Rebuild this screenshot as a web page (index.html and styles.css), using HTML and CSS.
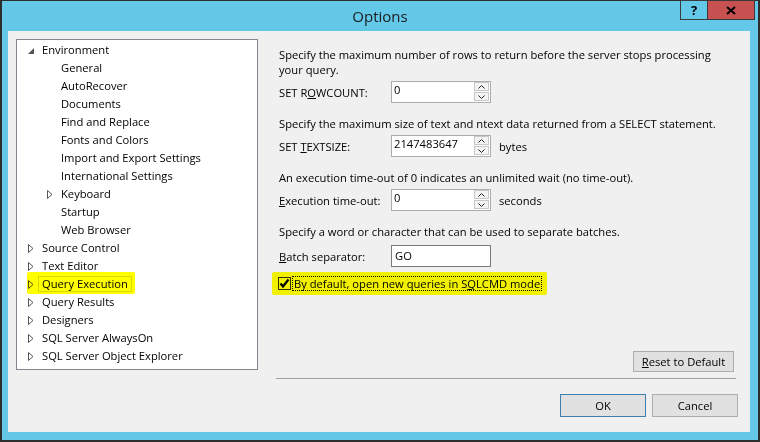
FILE: index.html
```html
<!DOCTYPE html>
<html lang="en">
<head>
  <meta charset="UTF-8" />
  <title>Options</title>
  <link rel="stylesheet" href="styles.css">
</head>
<body>
  <div class="window">
    <div class="titlebar">
      <span class="title">Options</span>
      <div class="caption">
        <span class="cap help">?</span>
        <span class="cap close">
          <svg width="10" height="9" viewBox="0 0 10 9"><path d="M1 1 L9 8 M9 1 L1 8" stroke="#000" stroke-width="2"/></svg>
        </span>
      </div>
    </div>

    <div class="client">
      <!-- left: category tree -->
      <ul class="tree">
        <li class="node open"><span class="exp"><svg width="6" height="6" viewBox="0 0 6 6"><path d="M6 0 L6 6 L0 6 Z" fill="#555"/></svg></span><span class="lbl">Environment</span></li>
        <li class="node child"><span class="exp"></span><span class="lbl">General</span></li>
        <li class="node child"><span class="exp"></span><span class="lbl">AutoRecover</span></li>
        <li class="node child"><span class="exp"></span><span class="lbl">Documents</span></li>
        <li class="node child"><span class="exp"></span><span class="lbl">Find and Replace</span></li>
        <li class="node child"><span class="exp"></span><span class="lbl">Fonts and Colors</span></li>
        <li class="node child"><span class="exp"></span><span class="lbl">Import and Export Settings</span></li>
        <li class="node child"><span class="exp"></span><span class="lbl">International Settings</span></li>
        <li class="node child"><span class="exp"><svg width="6" height="9" viewBox="0 0 6 9"><path d="M0.5 0.5 L5 4.5 L0.5 8.5 Z" fill="none" stroke="#555"/></svg></span><span class="lbl">Keyboard</span></li>
        <li class="node child"><span class="exp"></span><span class="lbl">Startup</span></li>
        <li class="node child"><span class="exp"></span><span class="lbl">Web Browser</span></li>
        <li class="node"><span class="exp"><svg width="6" height="9" viewBox="0 0 6 9"><path d="M0.5 0.5 L5 4.5 L0.5 8.5 Z" fill="none" stroke="#555"/></svg></span><span class="lbl">Source Control</span></li>
        <li class="node"><span class="exp"><svg width="6" height="9" viewBox="0 0 6 9"><path d="M0.5 0.5 L5 4.5 L0.5 8.5 Z" fill="none" stroke="#555"/></svg></span><span class="lbl">Text Editor</span></li>
        <li class="node"><span class="marked"><span class="exp"><svg width="6" height="9" viewBox="0 0 6 9"><path d="M0.5 0.5 L5 4.5 L0.5 8.5 Z" fill="none" stroke="#555"/></svg></span><span class="lbl selected">Query Execution</span></span></li>
        <li class="node"><span class="exp"><svg width="6" height="9" viewBox="0 0 6 9"><path d="M0.5 0.5 L5 4.5 L0.5 8.5 Z" fill="none" stroke="#555"/></svg></span><span class="lbl">Query Results</span></li>
        <li class="node"><span class="exp"><svg width="6" height="9" viewBox="0 0 6 9"><path d="M0.5 0.5 L5 4.5 L0.5 8.5 Z" fill="none" stroke="#555"/></svg></span><span class="lbl">Designers</span></li>
        <li class="node"><span class="exp"><svg width="6" height="9" viewBox="0 0 6 9"><path d="M0.5 0.5 L5 4.5 L0.5 8.5 Z" fill="none" stroke="#555"/></svg></span><span class="lbl">SQL Server AlwaysOn</span></li>
        <li class="node"><span class="exp"><svg width="6" height="9" viewBox="0 0 6 9"><path d="M0.5 0.5 L5 4.5 L0.5 8.5 Z" fill="none" stroke="#555"/></svg></span><span class="lbl">SQL Server Object Explorer</span></li>
      </ul>

      <!-- right: Query Execution page -->
      <div class="page">
        <div class="settings">
          <p class="hint">Specify the maximum number of rows to return before the server stops processing<br>your query.</p>
          <div class="field">
            <label>SET R<u>O</u>WCOUNT:</label>
            <div class="box spin">
              <span class="val">0</span>
              <div class="arrows">
                <span class="arr"><svg width="7" height="4" viewBox="0 0 7 4"><path d="M0.5 3.5 L3.5 0.5 L6.5 3.5" fill="none" stroke="#222"/></svg></span>
                <span class="arr"><svg width="7" height="4" viewBox="0 0 7 4"><path d="M0.5 0.5 L3.5 3.5 L6.5 0.5" fill="none" stroke="#222"/></svg></span>
              </div>
            </div>
          </div>

          <p class="hint">Specify the maximum size of text and ntext data returned from a SELECT statement.</p>
          <div class="field">
            <label>SET <u>T</u>EXTSIZE:</label>
            <div class="box spin">
              <span class="val">2147483647</span>
              <div class="arrows">
                <span class="arr"><svg width="7" height="4" viewBox="0 0 7 4"><path d="M0.5 3.5 L3.5 0.5 L6.5 3.5" fill="none" stroke="#222"/></svg></span>
                <span class="arr"><svg width="7" height="4" viewBox="0 0 7 4"><path d="M0.5 0.5 L3.5 3.5 L6.5 0.5" fill="none" stroke="#222"/></svg></span>
              </div>
            </div>
            <span class="unit">bytes</span>
          </div>

          <p class="hint">An execution time-out of 0 indicates an unlimited wait (no time-out).</p>
          <div class="field">
            <label><u>E</u>xecution time-out:</label>
            <div class="box spin">
              <span class="val">0</span>
              <div class="arrows">
                <span class="arr"><svg width="7" height="4" viewBox="0 0 7 4"><path d="M0.5 3.5 L3.5 0.5 L6.5 3.5" fill="none" stroke="#222"/></svg></span>
                <span class="arr"><svg width="7" height="4" viewBox="0 0 7 4"><path d="M0.5 0.5 L3.5 3.5 L6.5 0.5" fill="none" stroke="#222"/></svg></span>
              </div>
            </div>
            <span class="unit">seconds</span>
          </div>

          <p class="hint">Specify a word or character that can be used to separate batches.</p>
          <div class="field sep">
            <label><u>B</u>atch separator:</label>
            <div class="box text"><span class="val mid">GO</span></div>
          </div>

          <div class="check-row">
            <span class="marked wide">
              <span class="checkbox"><svg width="11" height="11" viewBox="0 0 11 11"><path d="M1.5 5.5 L4 8.5 L9.5 1.5" fill="none" stroke="#000" stroke-width="2.2"/></svg></span>
              <span class="focus">By default, open new queries in S<u>Q</u>LCMD mode</span>
            </span>
          </div>
        </div>

        <div class="reset-row"><button class="btn reset"><u>R</u>eset to Default</button></div>
        <div class="divider"></div>
        <div class="actions">
          <button class="btn default">OK</button>
          <button class="btn">Cancel</button>
        </div>
      </div>
    </div>
  </div>
</body>
</html>
```

FILE: styles.css
```css
body {
  margin: 0;
  font-family: "Open Sans", "Noto Sans", sans-serif;
  font-size: 11.2px;
  color: #000;
  background: #fff;
}
.window {
  width: 760px;
  height: 442px;
  box-sizing: border-box;
  background: #64c8e9;
  border: 2px solid #2d2d2d;
  border-top-width: 1px;
  display: flex;
  flex-direction: column;
}
.titlebar {
  position: relative;
  height: 30px;
  display: flex;
  justify-content: center;
  align-items: center;
}
.title {
  font-size: 15px;
  color: #1c1c1c;
  margin-top: -1px;
}
.caption {
  position: absolute;
  top: -1px;
  right: 3px;
  display: flex;
}
.cap {
  height: 20px;
  box-sizing: border-box;
  border: 1px solid #3a3a3a;
  display: flex;
  align-items: center;
  justify-content: center;
}
.help {
  width: 27px;
  font-weight: bold;
  font-size: 13px;
  border-right: none;
}
.close {
  width: 48px;
  background: #c75050;
}
.client {
  flex: 1;
  margin: 0 8px 8px 6px;
  background: #f0f0f0;
  padding: 8px 12px 15px 8px;
  display: flex;
  gap: 18px;
}

/* tree */
.tree {
  list-style: none;
  margin: 0;
  padding: 1px 0;
  width: 242px;
  height: 331px;
  box-sizing: border-box;
  background: #fff;
  border: 1px solid #828790;
}
.node {
  height: 18px;
  display: flex;
  align-items: center;
  padding-left: 8px;
  white-space: nowrap;
}
.node.child {
  padding-left: 27px;
}
.exp {
  width: 13px;
  height: 18px;
  display: flex;
  align-items: center;
  padding-left: 3px;
  box-sizing: border-box;
}
.node.open .exp {
  align-items: flex-start;
  padding-top: 7px;
}
.lbl {
  padding: 0 3px;
  border: 1px solid transparent;
  line-height: 14px;
}
.lbl.selected {
  border-color: #d9d9d9;
}
.marked {
  position: relative;
  display: flex;
  align-items: center;
}
.marked::after {
  content: '';
  position: absolute;
  left: 2px;
  right: -3px;
  top: -3px;
  bottom: -1px;
  background: #ffff00;
  mix-blend-mode: multiply;
  border-radius: 2px;
}

/* settings page */
.page {
  flex: 1;
  display: flex;
  flex-direction: column;
}
.settings {
  flex: 1;
  padding: 8px 0 0 3px;
}
.hint {
  margin: 13px 0 0;
  line-height: 15px;
  white-space: nowrap;
}
.hint:first-child {
  margin-top: 0;
}
.field {
  display: flex;
  align-items: center;
  margin-top: 4px;
  height: 22px;
}
.field.sep {
  margin-top: 6px;
}
.field label {
  width: 112px;
}
.box {
  width: 100px;
  height: 22px;
  box-sizing: border-box;
  border: 1px solid #abadb3;
  background: #fff;
  display: flex;
}
.box.text {
  border-color: #7a7a7a;
}
.val {
  flex: 1;
  padding-left: 2px;
  line-height: 15px;
}
.val.mid {
  line-height: 19px;
  padding-left: 3px;
}
.arrows {
  display: flex;
  flex-direction: column;
  gap: 1px;
  padding: 0 1px 0 0;
}
.arr {
  width: 15px;
  height: 9px;
  box-sizing: border-box;
  border: 1px solid #c8c8c8;
  background: #f4f4f4;
  display: flex;
  align-items: center;
  justify-content: center;
}
.unit {
  margin-left: 8px;
}
.check-row {
  margin-top: 9px;
  display: flex;
}
.marked.wide {
  margin-left: -1px;
}
.marked.wide::after {
  left: -6px;
  right: -5px;
  top: -4px;
  bottom: -4px;
}
.checkbox {
  width: 13px;
  height: 13px;
  box-sizing: border-box;
  border: 1px solid #333;
  display: flex;
  align-items: center;
  justify-content: center;
}
.focus {
  margin-left: 1px;
  padding: 0 1px;
  border: 1px dotted #000;
  line-height: 13px;
}

/* bottom buttons */
.btn {
  font: inherit;
  color: #000;
  background: #e1e1e1;
  border: 1px solid #adadad;
  padding: 0;
  cursor: pointer;
}
.reset-row {
  display: flex;
  justify-content: flex-end;
  padding-right: 4px;
}
.reset {
  width: 101px;
  height: 21px;
}
.divider {
  height: 1px;
  background: #a0a0a0;
  margin: 6px 2px 15px 0;
}
.actions {
  display: flex;
  justify-content: flex-end;
  gap: 6px;
}
.actions .btn {
  width: 86px;
  height: 23px;
}
.btn.default {
  border-color: #3c7fb1;
}
```
